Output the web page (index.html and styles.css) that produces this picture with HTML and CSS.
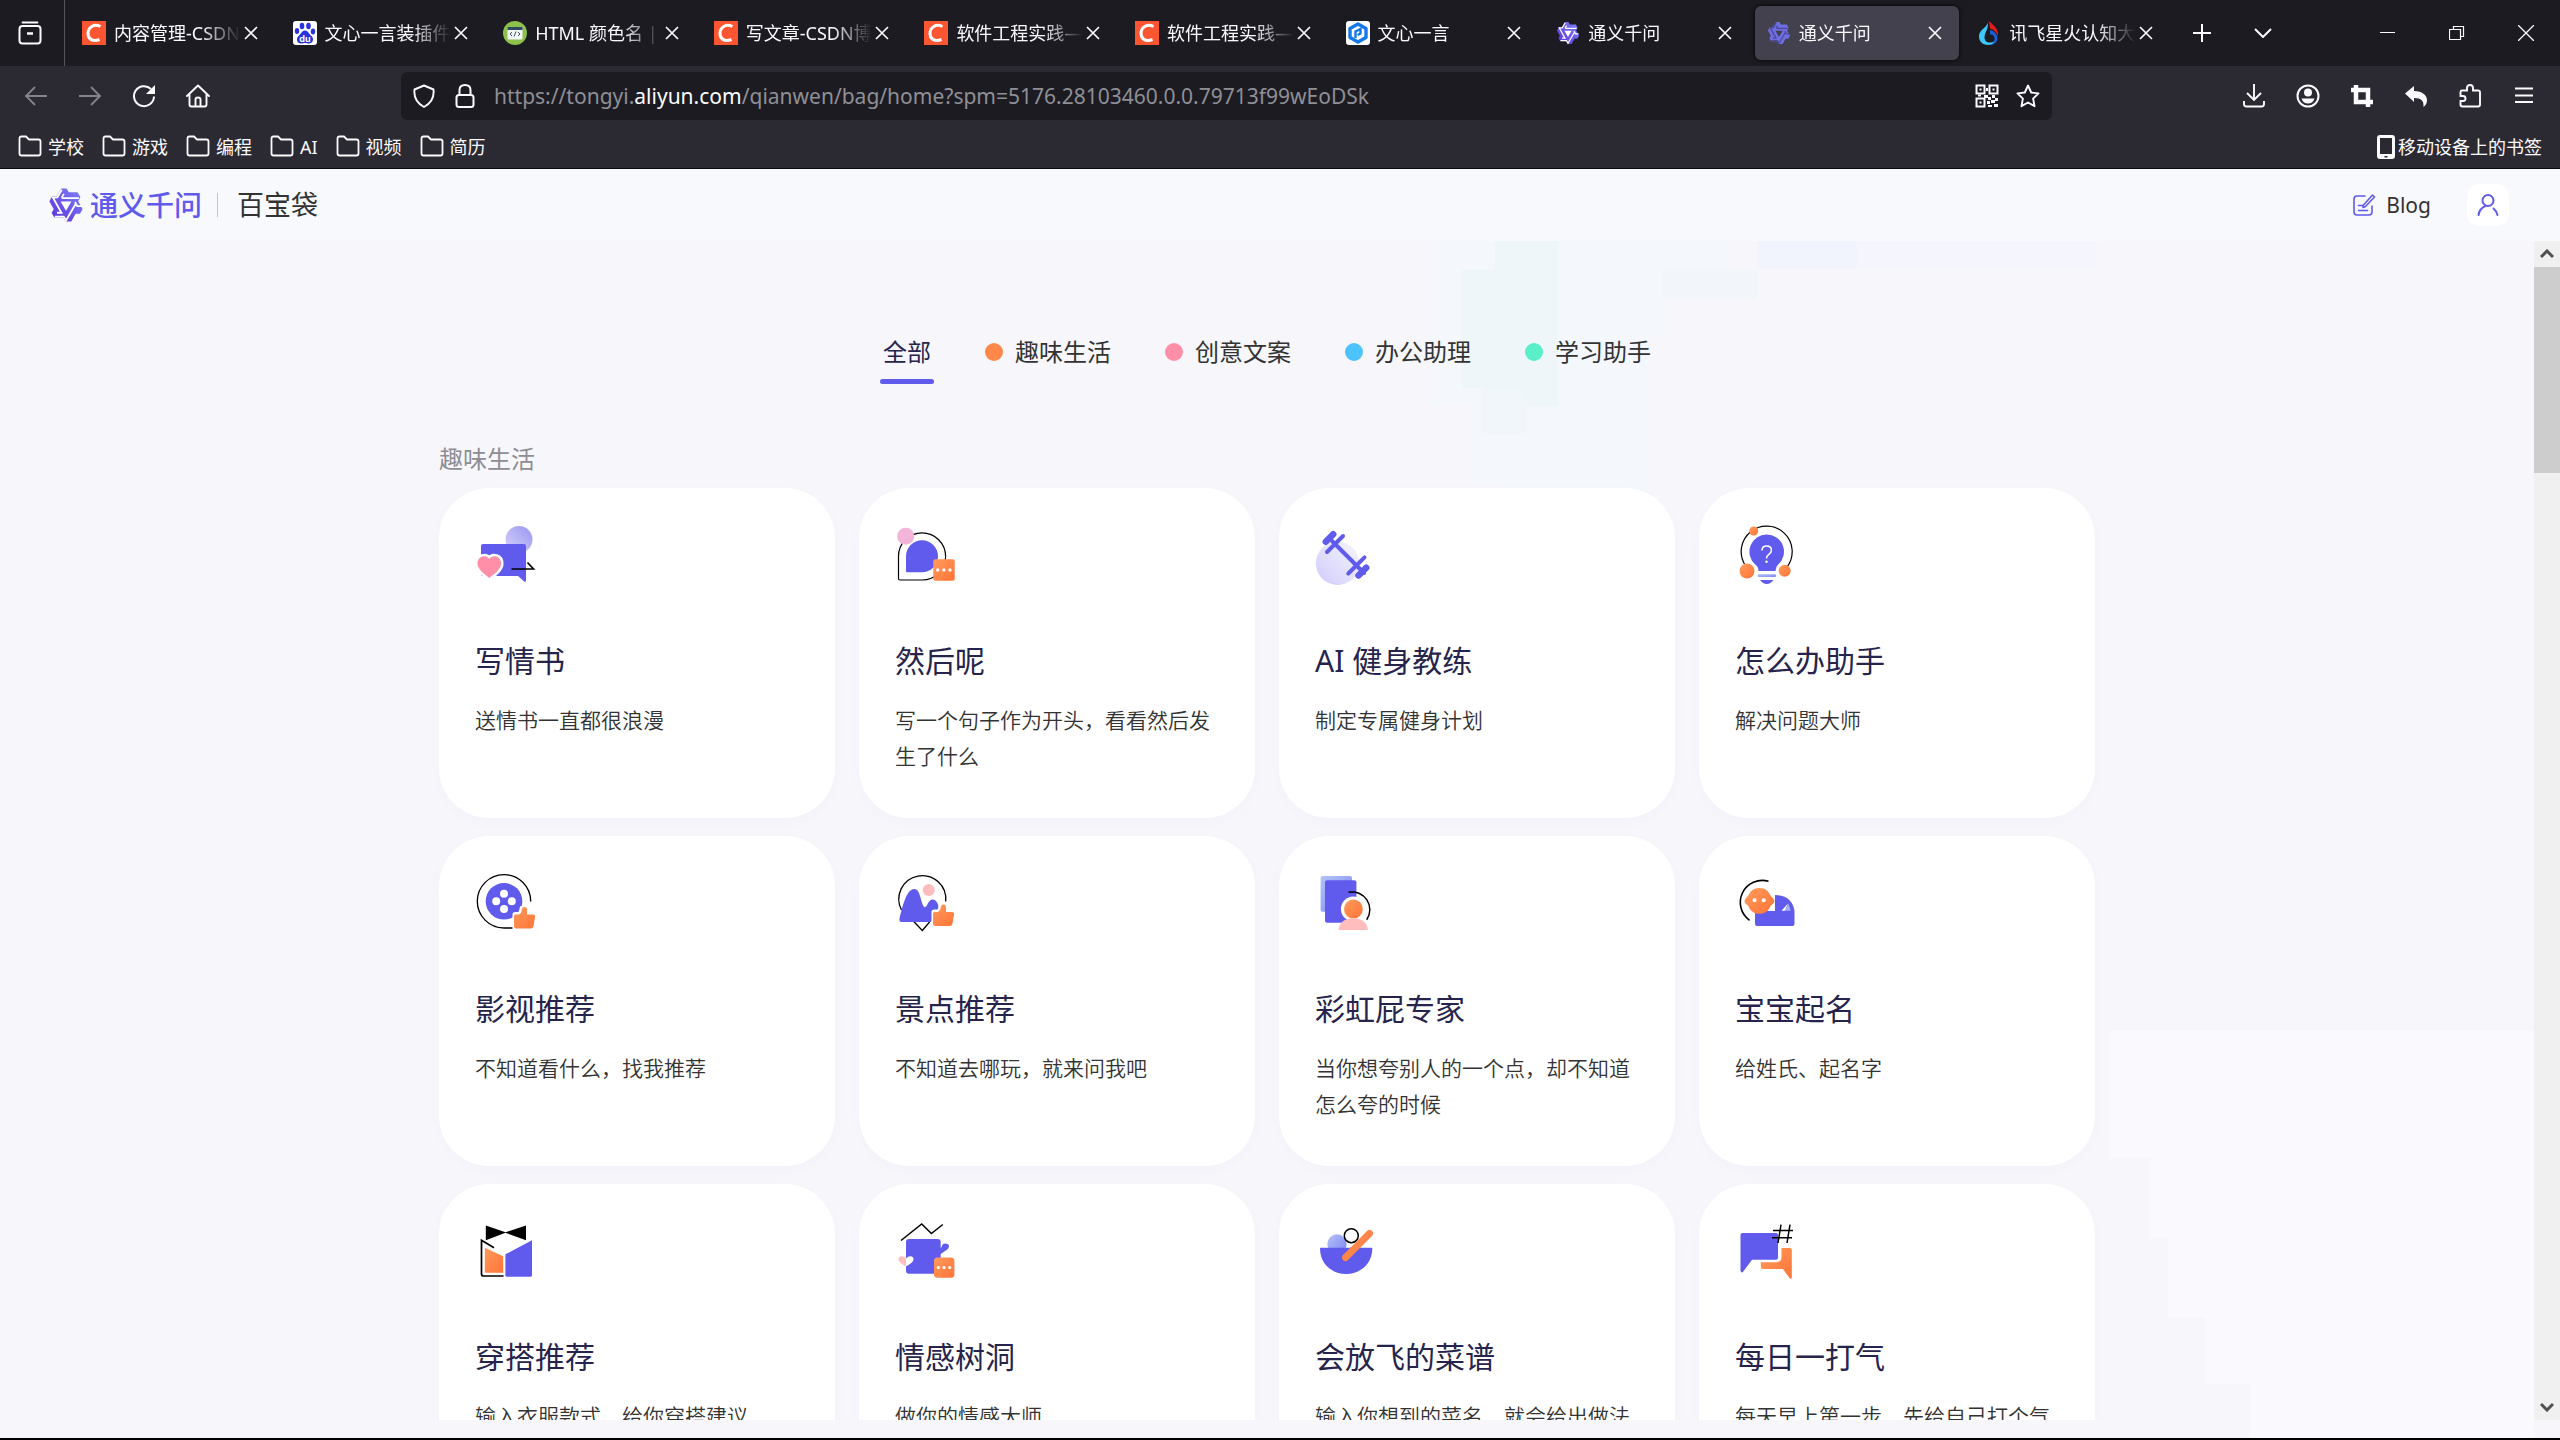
FILE: index.html
```html
<!DOCTYPE html>
<html lang="zh-CN">
<head>
<meta charset="utf-8">
<title>通义千问 百宝袋</title>
<link rel="stylesheet" href="styles.css">
</head>
<body>
<svg class="defs" aria-hidden="true">
  <defs>
    <linearGradient id="orange" x1="0" y1="0" x2="1" y2="1"><stop offset="0" stop-color="#ff9b5c"/><stop offset="1" stop-color="#ff7438"/></linearGradient>
    <linearGradient id="lilac" x1="0" y1="1" x2="1" y2="0"><stop offset="0" stop-color="#d6d4fa"/><stop offset="1" stop-color="#9a96f2"/></linearGradient>
    <linearGradient id="mist" x1="0" y1="1" x2="1" y2="0"><stop offset="0" stop-color="#cfcbfa"/><stop offset="1" stop-color="#f6f5ff"/></linearGradient>
    <linearGradient id="sky" x1="0" y1="0" x2="1" y2="1"><stop offset="0" stop-color="#b4c4f8"/><stop offset="1" stop-color="#7d84f2"/></linearGradient>
    <linearGradient id="qwen" x1="1" y1="0" x2="0" y2="1"><stop offset="0" stop-color="#7f86f5"/><stop offset="1" stop-color="#5a2be0"/></linearGradient>
    <symbol id="csdn" viewBox="0 0 24 24"><path fill="#fc5531" d="M0 0h24v24H0z"/><path d="M18.500 5.500C12 2.500 6 6 6 12.500c0 6 5 8.500 11.500 6" fill="none" stroke="#fff" stroke-width="3"/></symbol>
    <path id="star" d="M12.604 1.340c.393.690.784 1.382 1.174 2.075a.180.180 0 00.157.091h5.552c.174 0 .322.110.446.327l1.454 2.570c.190.337.240.478.024.837-.260.430-.513.864-.760 1.300l-.367.658c-.106.196-.223.280-.040.512l2.652 4.637c.172.301.111.494-.043.770-.437.785-.882 1.564-1.335 2.340-.159.272-.352.375-.680.370-.777-.016-1.552-.010-2.327.016a.099.099 0 00-.081.050 575.097 575.097 0 01-2.705 4.740c-.169.293-.380.363-.725.364-.997.003-2.002.004-3.017.002a.537.537 0 01-.465-.271l-1.335-2.323a.090.090 0 00-.083-.049H4.982c-.285.030-.553-.001-.805-.092l-1.603-2.770a.543.543 0 01-.002-.540l1.207-2.120a.198.198 0 000-.197 550.951 550.951 0 01-1.875-3.272l-.790-1.395c-.160-.310-.173-.496.095-.965.465-.813.927-1.625 1.387-2.436.132-.234.304-.334.584-.335a338.300 338.300 0 012.589-.001.124.124 0 00.107-.063l2.806-4.895a.488.488 0 01.422-.246c.524-.001 1.053 0 1.583-.006L11.704 1c.341-.003.724.032.900.340z"/>
    <path id="star-in" d="M9.200 1.800L6.250 6.860H3.200l5.800 10.300-3 .02M4.500 19.700l6 .01 1.500 2.550L18.600 11M18 10l1.500 2.800h3M20.600 7.370H9.150M9.100 7.200l1.500-2.600"/>
    <symbol id="tongyi" viewBox="0 0 24 24">
      <use href="#star" fill="url(#qwen)"/>
      <use href="#star-in" fill="none" stroke="#fff" stroke-width="1.200"/>
      <path fill="#fff" d="M8.400 9.700h7.200L12 15.900z"/>
    </symbol>
    <symbol id="tongyi-dim" viewBox="0 0 24 24">
      <use href="#star" fill="#6f6ee0"/>
      <use href="#star-in" fill="none" stroke="#4a489b" stroke-width="1.200"/>
      <path fill="#42414d" d="M8.400 9.700h7.200L12 15.900z"/>
    </symbol>
    <symbol id="close" viewBox="0 0 14 14"><path d="M1 1l12 12M13 1L1 13" fill="none" stroke="currentColor" stroke-width="1.700"/></symbol>
    <symbol id="folder" viewBox="0 0 24 24"><path d="M1.500 18.500v-15q0-2 2-2h4.500l3 3h9.500q2 0 2 2v12q0 2-2 2h-17q-2 0-2-2z" fill="none" stroke="currentColor" stroke-width="1.800"/></symbol>
    <symbol id="thumb" viewBox="0 0 24 24"><path d="M1.500 10q0-1.500 1.500-1.500h3.500Q9 7.500 9.300 4Q9.500 1 12 1t2.500 3v4.500h6q2.500 0 2 2.500l-1.500 9q-.500 2.500-3 2.500H4q-2.500 0-2.500-2.500z" fill="url(#orange)" stroke="#fff" stroke-width="5" paint-order="stroke"/></symbol>
  </defs>
</svg>

<header class="browser">
  <div class="tabbar">
    <button class="recent" aria-label="最近浏览"><svg viewBox="0 0 24 24" width="24" height="24"><path d="M4.500 1.500h15" fill="none" stroke="currentColor" stroke-width="1.800" stroke-linecap="round"/><rect x="1.500" y="5" width="21" height="17.500" rx="3" fill="none" stroke="currentColor" stroke-width="2"/><path d="M9 12.500h6" stroke="currentColor" stroke-width="2.500"/></svg></button>
    <nav class="tabs">
      <div class="tab"><svg class="fav"><use href="#csdn"/></svg><span>内容管理-CSDN</span><button aria-label="关闭"><svg><use href="#close"/></svg></button></div>
      <div class="tab"><svg class="fav" viewBox="0 0 24 24"><rect width="24" height="24" rx="3" fill="#fff"/><g fill="#2932e1"><ellipse cx="9" cy="5" rx="2.300" ry="3.200"/><ellipse cx="15.500" cy="5" rx="2.300" ry="3.200"/><ellipse cx="4" cy="10" rx="2.200" ry="3"/><ellipse cx="20" cy="10.500" rx="2.200" ry="3"/><path d="M12 9.500c3 0 4 3.500 6.500 5.500s2 7-2 7.500c-2 .3-2.500-.5-4.500-.5s-2.500.800-4.500.5c-4-.5-4.500-5.500-2-7.500s3.500-5.500 6.500-5.500z"/></g><text x="12" y="20.500" font-family="Inter, sans-serif" font-size="9" font-weight="700" fill="#fff" text-anchor="middle">du</text></svg><span>文心一言装插件</span><button aria-label="关闭"><svg><use href="#close"/></svg></button></div>
      <div class="tab"><svg class="fav" viewBox="0 0 24 24"><circle cx="12" cy="12" r="12" fill="#8cc14c"/><rect x="4.500" y="6" width="15" height="12.500" rx="1" fill="#f2f5f7"/><path fill="#2e4a62" d="M4.500 6h15v3h-15z"/><path d="M9 11l-2 2 2 2m6-4l2 2-2 2m-2-4.500l-2 5" fill="none" stroke="#456" stroke-width="1"/></svg><span>HTML 颜色名 |</span><button aria-label="关闭"><svg><use href="#close"/></svg></button></div>
      <div class="tab"><svg class="fav"><use href="#csdn"/></svg><span>写文章-CSDN博</span><button aria-label="关闭"><svg><use href="#close"/></svg></button></div>
      <div class="tab"><svg class="fav"><use href="#csdn"/></svg><span>软件工程实践—</span><button aria-label="关闭"><svg><use href="#close"/></svg></button></div>
      <div class="tab"><svg class="fav"><use href="#csdn"/></svg><span>软件工程实践—</span><button aria-label="关闭"><svg><use href="#close"/></svg></button></div>
      <div class="tab"><svg class="fav" viewBox="0 0 24 24"><rect width="24" height="24" rx="3" fill="#fff"/><path d="M12 3l8 4.500v9L12 21l-8-4.500v-9z" fill="none" stroke="#1677e8" stroke-width="3.400" stroke-linejoin="round"/><path d="M9.500 17v-6.500l5-2.500v4.500l-3 1.500" fill="none" stroke="#1677e8" stroke-width="2.400"/></svg><span>文心一言</span><button aria-label="关闭"><svg><use href="#close"/></svg></button></div>
      <div class="tab"><svg class="fav"><use href="#tongyi"/></svg><span>通义千问</span><button aria-label="关闭"><svg><use href="#close"/></svg></button></div>
      <div class="tab active"><svg class="fav"><use href="#tongyi-dim"/></svg><span>通义千问</span><button aria-label="关闭"><svg><use href="#close"/></svg></button></div>
      <div class="tab"><svg class="fav" viewBox="0 0 24 24"><path d="M11 2C8 8 2 9 2 15.500c0 5 4 8.500 9.500 8.500 5 0 8-3 8.500-7-2 3-4 4.500-7 4.500-3.500 0-5.500-2-5.500-5C7.500 12 11 9 11 2z" fill="#3dc8fa"/><path d="M11.500 0c7 5 10 9.500 9.500 15-2-4-4-6.500-8-7.500 0-2.500-.500-5-1.500-7.500z" fill="#e61b1b"/><path d="M13 9c4 1 7.500 4 7.500 8.500 0 3-3 6-7 6.500 3-2 4.500-4 4-7-.500-3-2.500-3.500-4.500-3.500z" fill="#1b5fd8"/></svg><span>讯飞星火认知大</span><button aria-label="关闭"><svg><use href="#close"/></svg></button></div>
    </nav>
    <button class="newtab" aria-label="新标签页"><svg viewBox="0 0 18 18" width="18" height="18"><path d="M9 0v18M0 9h18" stroke="currentColor" stroke-width="2"/></svg></button>
    <button class="alltabs" aria-label="列出所有标签页"><svg viewBox="0 0 18 10" width="18" height="10"><path d="M1 1l8 8 8-8" fill="none" stroke="currentColor" stroke-width="2"/></svg></button>
    <div class="winbtns">
      <button aria-label="最小化"><svg viewBox="0 0 16 16" width="16" height="16"><path d="M0 7.500h15" stroke="currentColor"/></svg></button>
      <button aria-label="还原"><svg viewBox="0 0 16 16" width="16" height="16"><path d="M.5 4.500h11v10H.5zM4.500 4V1.500h10v10H12" fill="none" stroke="currentColor" stroke-width="1.200"/></svg></button>
      <button aria-label="关闭窗口"><svg viewBox="0 0 16 16" width="16" height="16"><path d="M0 0l16 16M16 0L0 16" stroke="currentColor" stroke-width="1.300"/></svg></button>
    </div>
  </div>

  <div class="toolbar">
    <div class="navbtns">
      <button class="dim" aria-label="后退"><svg viewBox="0 0 24 24"><path d="M23 12H2m9-9l-9 9 9 9" fill="none" stroke="currentColor" stroke-width="1.800"/></svg></button>
      <button class="dim" aria-label="前进"><svg viewBox="0 0 24 24"><path d="M1 12h21m-9-9l9 9-9 9" fill="none" stroke="currentColor" stroke-width="1.800"/></svg></button>
      <button aria-label="刷新"><svg viewBox="0 0 24 24"><path d="M22 12.500a10 10 0 1 1-3-7.500" fill="none" stroke="currentColor" stroke-width="2"/><path d="M23 1v9h-9z" fill="currentColor"/></svg></button>
      <button aria-label="主页"><svg viewBox="0 0 24 24"><path d="M1 12L12 1.500 23 12M3.500 10v10.500q0 2 2 2h13q2 0 2-2V10M9.500 22v-6.500q0-2 2.500-2t2.500 2V22" fill="none" stroke="currentColor" stroke-width="1.900" stroke-linejoin="round" stroke-linecap="round"/></svg></button>
    </div>
    <div class="urlbar">
      <svg viewBox="0 0 24 24"><path d="M12 1.500l9.500 4c.8 7-2 13.500-9.500 17.500C4.500 19 1.700 12.500 2.500 5.500z" fill="none" stroke="currentColor" stroke-width="1.900" stroke-linejoin="round"/></svg>
      <svg viewBox="0 0 24 24"><rect x="3.500" y="11" width="17" height="12" rx="2.500" fill="none" stroke="currentColor" stroke-width="2"/><path d="M6.500 11V6q0-5 5.500-5t5.500 5v5" fill="none" stroke="currentColor" stroke-width="2"/></svg>
      <div class="url" role="textbox" aria-label="地址">https://tongyi.<b>aliyun.com</b>/qianwen/bag/home?spm=5176.28103460.0.0.79713f99wEoDSk</div>
      <svg viewBox="0 0 24 24"><path d="M1.500 1.500h8v8h-8zM14.500 1.500h8v8h-8zM1.500 14.500h8v8h-8z" fill="none" stroke="currentColor" stroke-width="2"/><path d="M4.500 4.500h2v2h-2zM17.500 4.500h2v2h-2zM4.500 17.500h2v2h-2zM9 11h4v3H9zM3 10.500h3v2H3zM11 4h2v3h-2zM13 13h3v3h-3zM17 11h3v3h-3zM20 14h3v3h-3zM16 16h4v3h-4zM12 17h3v3h-3zM13 21h4v2h-4zM19 20h4v3h-4z" fill="currentColor"/></svg>
      <svg viewBox="0 0 24 24"><path d="M12 1.500l3.200 7 7.300.9-5.400 5.200 1.400 7.600L12 18.500l-6.500 3.700 1.400-7.600L1.500 9.400l7.300-.9z" fill="none" stroke="currentColor" stroke-width="1.900" stroke-linejoin="round"/></svg>
    </div>
    <div class="actions">
      <button aria-label="下载"><svg viewBox="0 0 24 24"><path d="M12 0v16m-7-7l7 7 7-7M2 17v3q0 2.500 2.500 2.500h15q2.500 0 2.500-2.500v-3" fill="none" stroke="currentColor" stroke-width="1.900"/></svg></button>
      <button aria-label="账户"><svg viewBox="0 0 24 24"><circle cx="12" cy="12" r="10.500" fill="none" stroke="currentColor" stroke-width="2"/><circle cx="12" cy="8.500" r="4" fill="currentColor"/><path d="M5.500 14.500h13q-1.500 5-6.500 5t-6.500-5z" fill="currentColor"/></svg></button>
      <button aria-label="截图"><svg viewBox="0 0 24 24"><path d="M6 1v17h17M1 6h17v17" fill="none" stroke="currentColor" stroke-width="4.500"/></svg></button>
      <button aria-label="撤销"><svg viewBox="0 0 24 24"><path d="M1 9.500L10 2v5c8 0 13 4 13 9 0 3-1 5-3.500 7 .5-6-2-9-9.500-9v4z" fill="currentColor"/></svg></button>
      <button aria-label="扩展"><svg viewBox="0 0 24 24"><path d="M2.500 8q0-1.500 1.500-1.500h5V4q0-3 3-3t3 3v2.500h5q2 0 2 2v12q0 2-2 2H4.500q-2 0-2-2V17H5q2.500 0 2.500-2.500T5 12H2.500z" fill="none" stroke="currentColor" stroke-width="1.900"/></svg></button>
      <button aria-label="菜单"><svg viewBox="0 0 24 24"><path d="M3 4.500h18M3 11.500h18M3 18h18" stroke="currentColor" stroke-width="1.900"/></svg></button>
    </div>
  </div>

  <div class="bookmarks">
    <a href="#"><svg><use href="#folder"/></svg>学校</a>
    <a href="#"><svg><use href="#folder"/></svg>游戏</a>
    <a href="#"><svg><use href="#folder"/></svg>编程</a>
    <a href="#"><svg><use href="#folder"/></svg>AI</a>
    <a href="#"><svg><use href="#folder"/></svg>视频</a>
    <a href="#"><svg><use href="#folder"/></svg>简历</a>
    <a href="#" class="mobile"><svg viewBox="0 0 18 24"><path fill-rule="evenodd" d="M3 0h12q3 0 3 3v18q0 3-3 3H3q-3 0-3-3V3q0-3 3-3zM3 3v16h12V3zM7.500 21h3v1.500h-3z" fill="currentColor"/></svg>移动设备上的书签</a>
  </div>
</header>

<div class="page">
  <header class="sitebar">
    <a class="brand" href="#"><svg class="logo"><use href="#tongyi"/></svg>通义千问</a>
    <span class="rule"></span>
    <h1>百宝袋</h1>
    <a class="blog" href="#"><svg viewBox="0 0 24 24"><path d="M13 3H5Q2 3 2 6v13q0 3 3 3h12q3 0 3-3v-6M6.500 12.500h4M6.500 17.500h9M11.500 12l9-10 2 2-9 9.500-2.500 1z" fill="none" stroke="currentColor" stroke-width="1.600" stroke-linecap="round" stroke-linejoin="round"/></svg>Blog</a>
    <button class="user" aria-label="用户"><svg viewBox="0 0 24 24"><circle cx="12" cy="7.500" r="5.500" fill="none" stroke="currentColor" stroke-width="2"/><path d="M2.500 22q1-6.500 7-9M17.500 15.500q3 2.500 4 6.500" fill="none" stroke="currentColor" stroke-width="2" stroke-linecap="round"/></svg></button>
  </header>

  <div class="body">
    <svg class="glow" viewBox="0 0 2560 1197" preserveAspectRatio="xMidYMin slice" aria-hidden="true">
      <path fill="#f9f9fe" d="M2110 790h424v407H2250v-54h-45v-66h-37v-80h-18v-80h-40z"/>
      <path fill="#f4f8fc" d="M1430 0h300v28h-60v66h-20v240h-150v-90h-28v-80h-42z"/>
      <path fill="#eff6fa" d="M1495 0h63v165h-63v-18h-33V28h33z"/>
      <path fill="#f0f6fa" d="M1482 147h44v46h-44z"/>
      <path fill="#f2f6fa" d="M1663 28h94v31h-94z"/>
      <path fill="#f1f4fd" d="M1757 0h100v28h-100z"/>
      <path fill="#f5f6fd" d="M1857 0h240v28h-240z"/>
    </svg>
    <main>
      <nav class="cats">
        <button class="on">全部</button>
        <button><i class="c1"></i>趣味生活</button>
        <button><i class="c2"></i>创意文案</button>
        <button><i class="c3"></i>办公助理</button>
        <button><i class="c4"></i>学习助手</button>
      </nav>
      <h2>趣味生活</h2>
      <div class="grid">
        <a class="card" href="#"><svg viewBox="0 0 60 60"><circle cx="44" cy="15.500" r="13.500" fill="url(#lilac)"/><path d="M6 22q0-2 2-2h41q2 0 2 2v35q-1 1.500-2 .3L43 52H8q-2 0-2-2z" fill="#605bec"/><path d="M14.300 54C10 50.500 2.500 45.500 2.500 39.500c0-7.500 8.500-9.500 11.800-4.500 3.300-5 11.800-3 11.800 4.500 0 6-7.500 11-11.800 14.500z" fill="#ff8fa8" stroke="#fff" stroke-width="5" paint-order="stroke"/><path d="M36.500 45h22l-6-6.500" fill="none" stroke="#000" stroke-width="1.700"/></svg><h3>写情书</h3><p>送情书一直都很浪漫</p></a>
        <a class="card" href="#"><svg viewBox="0 0 60 60"><path d="M27 8.800a23.600 23.600 0 0 1 0 47.200H5q-1.500 0-1.500-1.500V32.500A23.600 23.600 0 0 1 27 8.800z" fill="none" stroke="#000" stroke-width="1.200"/><path d="M27 16.300a16 16 0 0 1 0 32H12q-1 0-1-1v-15a16 16 0 0 1 16-16z" fill="#605bec"/><circle cx="10.700" cy="12.300" r="8.500" fill="#f3b4d9"/><rect x="38.300" y="35.300" width="21.400" height="21.400" rx="2" fill="url(#orange)"/><g fill="#fff"><circle cx="42.700" cy="46" r="1.700"/><circle cx="48.800" cy="46" r="1.700"/><circle cx="55" cy="46" r="1.700"/></g></svg><h3>然后呢</h3><p>写一个句子作为开头，看看然后发生了什么</p></a>
        <a class="card" href="#"><svg viewBox="0 0 60 60"><circle cx="22.500" cy="39.300" r="21.700" fill="url(#mist)"/><g stroke="#605bec" stroke-linecap="round" stroke-width="4"><path d="M15 15l34 34M12 28l16-16M33.300 49.500l16.200-16.200"/><path d="M10.800 17.700l7.400-7.400M43.500 51.500l7.700-7.700" stroke-width="6.500"/></g></svg><h3>AI 健身教练</h3><p>制定专属健身计划</p></a>
        <a class="card" href="#"><svg viewBox="0 0 60 60"><path d="M10 41A25.500 25.500 0 1 1 52 43" fill="none" stroke="#000" stroke-width="1.200"/><path d="M31.700 10.400a17.300 17.300 0 0 1 11.500 30.200Q40.500 43 40.500 47H23.500q0-4-3.300-6.400A17.300 17.300 0 0 1 31.700 10.400z" fill="#605bec"/><rect x="22.700" y="50.300" width="18.300" height="2.800" rx="1" fill="url(#sky)"/><path d="M25 56h13.500q-3 4-6.800 4T25 56z" fill="#605bec"/><g fill="url(#orange)"><circle cx="18.700" cy="7" r="4.500"/><circle cx="12" cy="47" r="7.500"/><circle cx="49.700" cy="46.700" r="6"/></g><path d="M27 26.500q0-4.500 4.700-4.500t4.700 4.300q0 2.400-2.500 4t-2.400 4.200" fill="none" stroke="#fff" stroke-width="1.500"/><circle cx="31.500" cy="37.700" r="1.200" fill="#fff"/></svg><h3>怎么办助手</h3><p>解决问题大师</p></a>
        <a class="card" href="#"><svg viewBox="0 0 60 60"><path d="M55.700 29.500A26.700 26.700 0 1 0 29 56h22" fill="none" stroke="#000" stroke-width="1.300"/><circle cx="29" cy="29.300" r="18.300" fill="#605bec"/><g fill="#fff"><circle cx="29" cy="21.700" r="4"/><circle cx="21.200" cy="29.300" r="4"/><circle cx="36.800" cy="29.300" r="4"/><circle cx="29" cy="37" r="4"/></g><use href="#thumb" x="37.500" y="34" width="24" height="24"/></svg><h3>影视推荐</h3><p>不知道看什么，找我推荐</p></a>
        <a class="card" href="#"><svg viewBox="0 0 60 60"><path d="M50.700 29.500A23.500 23.500 0 1 0 6.500 38M19 49.700l8.300 8.800 7.300-8.500" fill="none" stroke="#000" stroke-width="1.300"/><circle cx="33.700" cy="18" r="6" fill="#ffbdbd"/><path d="M4.400 47C7 37 11 17 19.200 17c6.500 0 6 13 10 18 3 1.500 3.500-7.500 8.500-7.500 3.500 0 5.500 4.500 6.300 8L36 50H6q-2-.5-1.600-3z" fill="#605bec"/><use href="#thumb" x="36.500" y="31.500" width="24" height="24"/></svg><h3>景点推荐</h3><p>不知道去哪玩，就来问我吧</p></a>
        <a class="card" href="#"><svg viewBox="0 0 60 60"><rect x="5.600" y="4" width="31.400" height="35.700" rx="2" fill="url(#sky)"/><rect x="10" y="8.300" width="31.400" height="42.500" rx="2" fill="#605bec"/><circle cx="38.400" cy="37" r="12.500" fill="#fff"/><circle cx="38.400" cy="37" r="9.400" fill="url(#orange)"/><path d="M23.500 58Q25 46.200 38.200 46.200T53 58z" fill="#ffbdbd"/><path d="M33.500 20.300A17.700 17.700 0 0 1 51.700 47.700" fill="none" stroke="#000" stroke-width="1.500"/></svg><h3>彩虹屁专家</h3><p>当你想夸别人的一个点，却不知道怎么夸的时候</p></a>
        <a class="card" href="#"><svg viewBox="0 0 60 60"><path d="M33.500 9.300A22 22 0 0 0 14.500 48.300" fill="none" stroke="#000" stroke-width="1.600"/><path d="M20 38.700h20V23q17 0 19.500 16v13q0 2-2 2H22q-2 0-2-2z" fill="#605bec"/><path d="M53 31.500l-6.500 7.200h3.500z" fill="#fff"/><path d="M53.500 31.500l2.200 7.200H50z" fill="#a6b2f7"/><path d="M24.500 38.700H40V25z" fill="#fff"/><path d="M24.400 16c6 0 9.500 3.500 11 7.500q4 3.500 4 5.500t-4 5c-1.500 4.500-5 7.800-11 7.800s-9.500-3.300-11-7.800q-4-3-4-5t4-5.500c1.500-4 5-7.500 11-7.500z" fill="url(#orange)"/><circle cx="19.500" cy="28.300" r="2" fill="#fff"/><circle cx="28.700" cy="28.300" r="2" fill="#fff"/></svg><h3>宝宝起名</h3><p>给姓氏、起名字</p></a>
        <a class="card" href="#"><svg viewBox="0 0 60 60"><path d="M10.800 5.500l19.700 6.800L51 5.500v14.700l-20.500-7.400-19.700 7.400z"/><path d="M19 27.700L6.500 20.300V54q0 2 2 2h20" fill="none" stroke="#000" stroke-width="1.700"/><path d="M9.800 27.700l18.400 8.600v16.400H11q-1.200 0-1.200-1.200z" fill="url(#orange)"/><path d="M57 20.300v34.900q0 1.500-1.500 1.500H32q-1.600 0-1.600-1.500V34.300z" fill="#605bec"/></svg><h3>穿搭推荐</h3><p>输入衣服款式，给你穿搭建议</p></a>
        <a class="card" href="#"><svg viewBox="0 0 60 60"><path d="M6 20.500L26.700 4l9.700 9.500 11.400-9" fill="none" stroke="#000" stroke-width="1.500"/><path d="M14 19h28.700q3 0 3 3v6c1.500-.5 1-4.500 4-4.500 5.500 0 5 4 2.500 6l-6.500 4.500v16.700q0 3-3 3H14q-3 0-3-3V22q0-3 3-3z" fill="#605bec"/><path d="M11 46.500c-3-2-7.500-4-7.500-7.500s5-3.500 7.500-.5z" fill="#ffbdbd"/><path d="M11 46.500c3-2 7.500-4 7.500-7.500s-5-3.500-7.500-.5z" fill="#fff"/><rect x="39" y="37.500" width="20.400" height="20.300" rx="3.500" fill="url(#orange)"/><g fill="#fff"><circle cx="43.300" cy="47.500" r="1.600"/><circle cx="49" cy="47.500" r="1.600"/><circle cx="54.700" cy="47.500" r="1.600"/></g></svg><h3>情感树洞</h3><p>做你的情感大师</p></a>
        <a class="card" href="#"><svg viewBox="0 0 60 60"><circle cx="22" cy="24" r="9.700" fill="url(#sky)"/><path d="M5 28.500q0-.8.800-.8h50.700q.8 0 .8.800C57.300 43 46 54 31 54S5 43 5 28.500z" fill="#605bec"/><circle cx="36.300" cy="15.700" r="7" fill="none" stroke="#000" stroke-width="1.500"/><path d="M30.500 37.500l24-24" stroke="#ff864a" stroke-width="7" stroke-linecap="round"/></svg><h3>会放飞的菜谱</h3><p>输入你想到的菜名，就会给出做法</p></a>
        <a class="card" href="#"><svg viewBox="0 0 60 60"><path d="M5.500 15q0-2 2-2H41q2 0 2 2v22.700q0 2-2 2H17L7.500 52.500q-2 0-2-2z" fill="#605bec"/><path d="M46.500 28H55q1.800 0 1.800 2v28q-1 1.500-2 .3L47.900 49H27.800q-2 0-2-2v-4.700H41q5.500 0 5.500-5.500z" fill="url(#orange)"/><path d="M38 10.500h20M37 17.800h20M46 4.700L43 23M55 4.700L52 23" fill="none" stroke="#000" stroke-width="1.500"/></svg><h3>每日一打气</h3><p>每天早上第一步，先给自己打个气</p></a>
      </div>
    </main>
    <div class="scrollbar">
      <button aria-label="向上"><svg viewBox="0 0 14 10"><path d="M1 8l6-6 6 6" fill="none" stroke="#505050" stroke-width="3"/></svg></button>
      <div class="thumb"></div>
      <button aria-label="向下" class="down"><svg viewBox="0 0 14 10"><path d="M1 2l6 6 6-6" fill="none" stroke="#505050" stroke-width="3"/></svg></button>
    </div>
  </div>
</div>
</body>
</html>
```
FILE: styles.css
```css
* { box-sizing: border-box; }
body {
  margin: 0;
  height: 100vh;
  display: flex;
  flex-direction: column;
  overflow: hidden;
  font-family: "Noto Sans", "Noto Sans CJK SC", sans-serif;
  background: #000;
}
button {
  padding: 0;
  border: 0;
  background: none;
  color: inherit;
  font: inherit;
  display: flex;
  align-items: center;
  justify-content: center;
}
a { color: inherit; text-decoration: none; }
h1, h2, h3, p { margin: 0; font-weight: 400; }
svg { flex: none; display: block; }
.defs { position: absolute; width: 0; height: 0; }

/* browser frame */
.browser { color: #fbfbfe; background: #2b2a33; border-bottom: 1px solid #0c0c0d; }
.tabbar { display: flex; height: 66px; background: #1c1b22; }
.recent { flex: none; width: 65px; padding-right: 4px; border-right: 1px solid #55545c; }
.tabs { flex: 1; min-width: 0; display: flex; padding: 6px 0 6px 2px; }
.tab {
  flex: 1 1 0;
  min-width: 0;
  display: flex;
  align-items: center;
  margin: 0 3px;
  padding: 0 16px 0 12px;
  border-radius: 6px;
  font-size: 18px;
}
.tab.active { background: #42414d; box-shadow: 0 0 4px #000; }
.fav { width: 24px; height: 24px; margin-right: 8px; }
.tab span {
  flex: 1;
  min-width: 0;
  overflow: hidden;
  white-space: nowrap;
  line-height: 30px;
  mask-image: linear-gradient(to left, transparent, #000 40px);
}
.tab button { width: 16px; height: 24px; margin-left: 2px; }
.tab button svg { width: 14px; height: 14px; }
.newtab { flex: none; width: 58px; }
.alltabs { flex: none; width: 64px; }
.winbtns { flex: none; display: flex; margin-left: 58px; }
.winbtns button { width: 69px; }

.toolbar { display: flex; align-items: center; height: 60px; padding: 0 9px; }
.toolbar svg { width: 24px; height: 24px; }
.navbtns { display: flex; width: 392px; }
.navbtns button { width: 54px; height: 48px; }
.dim { color: #85848b; }
.urlbar {
  flex: 1;
  display: flex;
  align-items: center;
  gap: 17px;
  height: 48px;
  padding: 0 12px 0 11px;
  border-radius: 6px;
  background: #1c1b22;
}
.url { flex: 1; min-width: 0; color: #8f8f96; font-size: 21px; line-height: 32px; white-space: nowrap; }
.url b { font-weight: 400; color: #fbfbfe; }
.actions { display: flex; justify-content: flex-end; width: 499px; }
.actions button { width: 54px; height: 48px; }

.bookmarks { display: flex; gap: 18px; height: 42px; padding: 0 18px; align-items: center; font-size: 18px; line-height: 24px; }
.bookmarks a { display: flex; align-items: center; gap: 6px; }
.bookmarks svg { width: 24px; height: 24px; }
.bookmarks .mobile { margin-left: auto; gap: 3px; }
.bookmarks .mobile svg { width: 18px; }

/* site */
.page { flex: 1; min-height: 0; display: flex; flex-direction: column; margin-bottom: 2px; background: #f6f6fb; }
.sitebar { display: flex; align-items: center; height: 72px; padding: 0 51px 0 48px; background: #f7f9fd; color: #333; }
.brand { display: flex; align-items: center; gap: 6px; color: #605bec; font-size: 28px; font-weight: 500; line-height: 36px; }
.logo { width: 36px; height: 36px; }
.rule { width: 1px; height: 24px; margin: 0 19px 0 15px; background: #c4c5cc; }
h1 { font-size: 27px; line-height: 36px; }
.blog { display: flex; align-items: center; gap: 10px; margin-left: auto; font-size: 21px; line-height: 30px; }
.blog svg { width: 24px; height: 24px; color: #605bec; }
.user { width: 42px; height: 42px; margin-left: 36px; border-radius: 12px; background: #fff; color: #605bec; }
.user svg { width: 24px; height: 24px; }

.body { position: relative; flex: 1; min-height: 0; display: flex; padding-bottom: 18px; }
.glow { position: absolute; inset: 0; width: 100%; height: 100%; }
main { position: relative; flex: 1; min-width: 0; overflow: hidden; }
.cats { display: flex; justify-content: center; gap: 54px; padding-top: 90px; color: #333; font-size: 24px; line-height: 42px; }
.cats button { position: relative; gap: 12px; }
.cats i { width: 18px; height: 18px; border-radius: 50%; }
.cats .c1 { background: #ff874a; }
.cats .c2 { background: #ff8fa8; }
.cats .c3 { background: #4cc3ff; }
.cats .c4 { background: #5aefc8; }
.cats .on { color: #26244c; }
.cats .on::after { content: ""; position: absolute; left: -3px; right: -3px; bottom: -11px; height: 5px; border-radius: 3px; background: #605bec; }
h2 { max-width: 1656px; margin: 68px auto 11px; color: #8d8d93; font-size: 24px; line-height: 36px; }
.grid { display: grid; grid-template-columns: repeat(4, 1fr); grid-auto-rows: 330px; gap: 18px 24px; max-width: 1656px; margin: 0 auto; }
.card { padding: 36px; border-radius: 50px; background: #fff; box-shadow: 0 4px 16px rgba(60, 50, 140, .02); color: #333; }
.card > svg { width: 60px; height: 60px; overflow: visible; }
h3 { margin: 56px 0 20px; color: #26244c; font-size: 30px; font-weight: 400; line-height: 42px; }
.card p { font-size: 21px; font-weight: 350; line-height: 36px; }

.scrollbar { position: relative; display: flex; flex-direction: column; width: 26px; background: #f0f0f0; }
.scrollbar button { height: 26px; }
.scrollbar svg { width: 14px; height: 10px; }
.scrollbar .thumb { height: 206px; background: #cdcdcd; }
.scrollbar .down { margin-top: auto; }
```
